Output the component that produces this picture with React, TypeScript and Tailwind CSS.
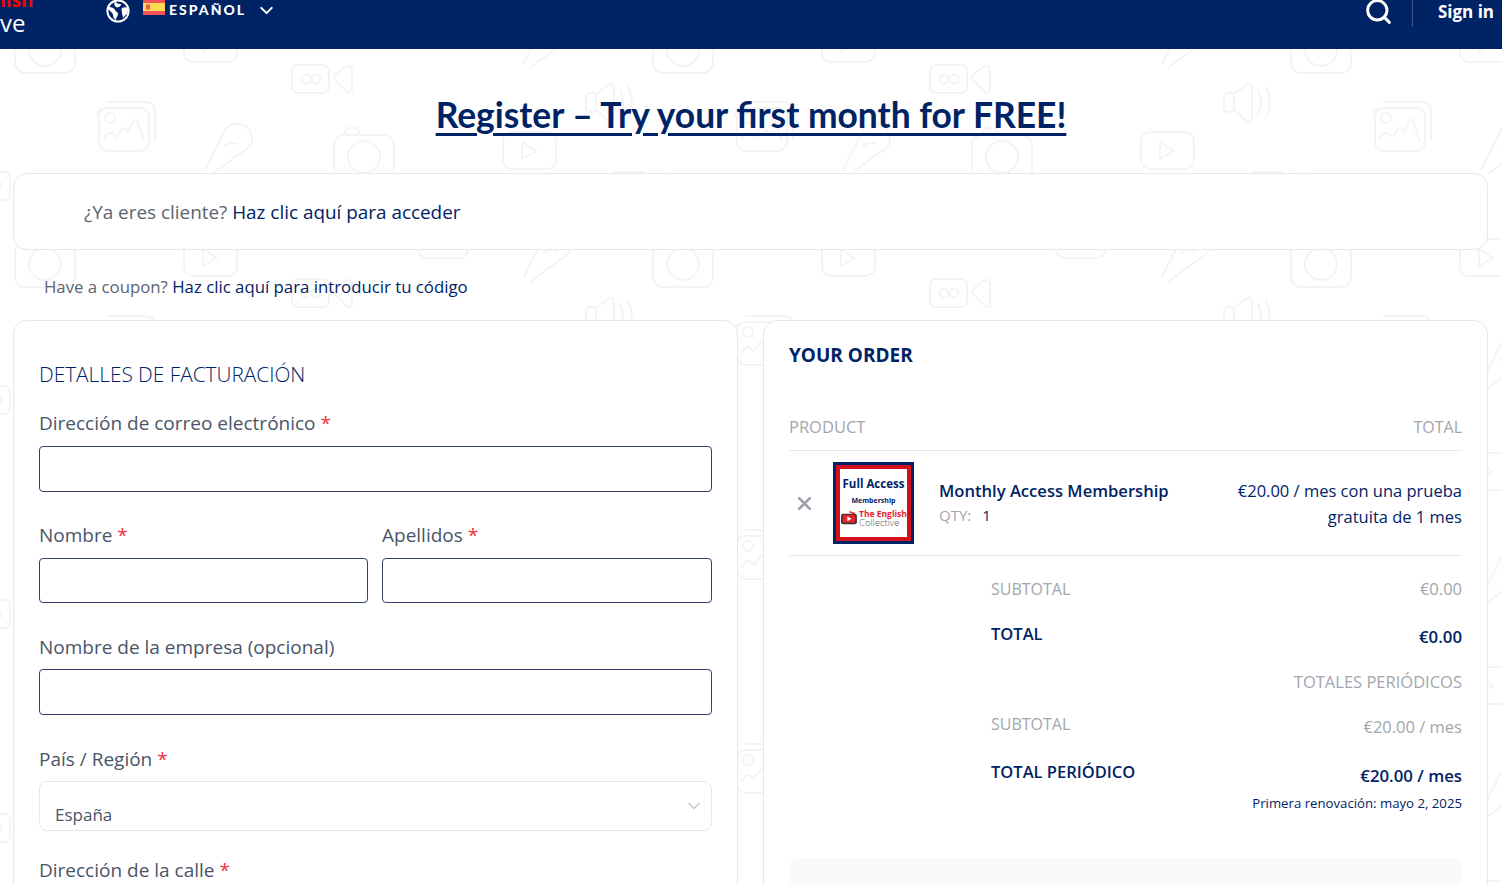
import { ChevronDown, Search, X } from "lucide-react";

function PatternIcons({ dx = 0, dy = 0 }: { dx?: number; dy?: number }) {
  return (
    <g transform={`translate(${dx} ${dy})`} fill="none" stroke="#f4f4f4" strokeWidth="2" strokeLinecap="round" strokeLinejoin="round">
      {/* camera */}
      <rect x="15" y="28" width="60" height="45" rx="10" />
      <circle cx="45" cy="50" r="16" />
      <path d="M26 27c0-4 2-6 5-6h5c3 0 4 2 4 5" />
      {/* play */}
      <rect x="184" y="25" width="53" height="37" rx="9" />
      <path d="M203 35v17l14-8z" />
      {/* video cam */}
      <rect x="292" y="65" width="37" height="28" rx="6" />
      <circle cx="306" cy="79" r="4.5" />
      <circle cx="316" cy="79" r="4.5" />
      <path d="M334 76l11-9c3-2 7-1 7 3v20c0 3-3 4-5 2l-12-12z" />
      {/* image */}
      <rect x="99" y="108" width="50" height="43" rx="9" />
      <path d="M108 102h37c7 0 10 4 10 10v28" />
      <path d="M97 116c0-4 2-6 5-7" />
      <circle cx="110" cy="118" r="5" />
      <path d="M104 139c4-8 8-7 11-3 3 3 6-10 9-8 3 2 3 5 5 2 3-8 6-13 8-9l7 20" />
      {/* mic */}
      <path d="M205 170l20-40c3-5 10-7 15-6 8 1 12 9 12 15 0 6-4 11-10 13l-30 22" />
      <path d="M225 146c3-3 9-4 13-2" />
      {/* speaker */}
      <rect x="586" y="93" width="10" height="19" rx="4" />
      <path d="M596 94l12-9c3-2 6-1 6 3v30c0 4-3 5-6 3l-12-12" />
      <path d="M620 90c4 8 4 18 0 24" />
      <path d="M628 87c5 10 5 23 0 31" />
    </g>
  );
}

function Background() {
  return (
    <svg className="absolute inset-0 h-full w-full" aria-hidden="true">
      <defs>
        <pattern id="doodles" width="638" height="214" patternUnits="userSpaceOnUse">
          <PatternIcons />
          <PatternIcons dy={214} />
          <PatternIcons dx={319} dy={107} />
          <PatternIcons dx={-319} dy={107} />
          <PatternIcons dx={319} dy={-107} />
          <PatternIcons dx={-319} dy={-107} />
        </pattern>
      </defs>
      <rect width="100%" height="100%" fill="url(#doodles)" />
    </svg>
  );
}

function GlobeIcon() {
  return (
    <svg className="-mt-[1px] h-[24px] w-[24px]" viewBox="0 0 24 24" fill="none">
      <circle cx="12" cy="12" r="10.6" stroke="#ffffff" strokeWidth="2" />
      <path d="M3 8c3 0 5 1 6 3s3 2 3 4-2 3-2 6c-2-1-3-3-3-5s-2-3-3-4-2-2-1-4z" fill="#ffffff" />
      <path d="M9 2c1 2 3 3 5 3s1 2-1 3-3 0-4-1-1-3 0-5z" fill="#ffffff" />
      <path d="M16 9c2-1 4-1 6 0 0 2 0 4-1 6-2 1-3 3-4 4 0-2-1-3-1-5s-1-4 0-5z" fill="#ffffff" />
    </svg>
  );
}

function Header() {
  return (
    <header className="relative flex h-[49px] items-start overflow-hidden bg-[#002366] text-white">
      <div className="-mt-[12px] w-[106px] font-['Open_Sans',sans-serif] leading-[24px]">
        <div className="text-[19px] font-bold text-[#ff0000]">lish</div>
        <div className="-mt-[1px] text-[24px]">ve</div>
      </div>
      <GlobeIcon />
      <svg className="-mt-[1px] ml-[13px] h-[16px] w-[22px]" viewBox="0 0 22 16">
        <rect width="22" height="16" fill="#f1555a" />
        <rect y="4" width="22" height="8" fill="#ffda55" />
        <rect x="3" y="5.5" width="4" height="5" fill="#f1555a" />
      </svg>
      <span className="ml-[4px] -mt-[1px] font-['Lato',sans-serif] text-[14px] leading-[22px] font-black tracking-[2px]">ESPAÑOL</span>
      <ChevronDown className="ml-[10px] h-[21px] w-[21px]" strokeWidth={2.4} />
      <div className="ml-auto flex items-start">
        <Search className="-mt-[3px] h-[29px] w-[29px]" strokeWidth={2.4} />
        <div className="ml-[19px] h-[27px] w-px bg-[#3d5685]" />
        <span className="ml-[25px] mr-[8px] font-['Open_Sans',sans-serif] text-[17px] leading-[24px] font-bold">Sign in</span>
      </div>
    </header>
  );
}

function Req() {
  return <span className="text-[#f0313f]"> *</span>;
}

function Label({ text, required = true }: { text: string; required?: boolean }) {
  return (
    <div className="text-[19px] leading-[26px] text-[#4a5568]">
      {text}
      {required && <Req />}
    </div>
  );
}

function Input({ className }: { className: string }) {
  return <div className={`rounded-[4px] border border-[#33406a] bg-white ${className}`} />;
}

function BillingCard() {
  return (
    <section className="h-[600px] w-[725px] rounded-t-[14px] border border-[#e8e8ec] bg-white px-[25px] pt-[40px]">
      <h2 className="text-[20.8px] leading-[26px] font-light text-[#002366]">DETALLES DE FACTURACIÓN</h2>
      <div className="mt-[23px]">
        <Label text="Dirección de correo electrónico" />
        <Input className="mt-[10px] h-[46px]" />
      </div>
      <div className="mt-[30px] flex gap-[14px]">
        <div className="w-[329px]">
          <Label text="Nombre" />
          <Input className="mt-[10px] h-[45px]" />
        </div>
        <div className="flex-1">
          <Label text="Apellidos" />
          <Input className="mt-[10px] h-[45px]" />
        </div>
      </div>
      <div className="mt-[31px]">
        <Label text="Nombre de la empresa (opcional)" required={false} />
        <Input className="mt-[9px] h-[46px]" />
      </div>
      <div className="mt-[31px]">
        <Label text="País / Región" />
        <div className="mt-[9px] flex h-[50px] items-end justify-between rounded-[8px] border border-[#e8e8ec] bg-white pr-[7px] pb-[2px] pl-[15px]">
          <span className="text-[17px] leading-[26px] text-[#4a5568]">España</span>
          <ChevronDown className="mb-[12px] h-[20px] w-[20px] text-[#c5c8d0]" strokeWidth={2} />
        </div>
      </div>
      <div className="mt-[26px]">
        <Label text="Dirección de la calle" />
      </div>
    </section>
  );
}

function ProductThumb() {
  return (
    <div className="h-[82px] w-[81px] border-[3px] border-[#002366] bg-white">
      <div className="flex h-full w-full flex-col items-center border-[4px] border-[#d2101e] pt-[8px]">
        <div className="whitespace-nowrap text-[11.5px] leading-[14px] font-bold text-[#002366]">Full Access</div>
        <div className="mt-[5px] text-[7px] leading-[10px] font-bold text-[#002366]">Membership</div>
        <div className="mt-[3px] flex w-full items-center">
          <svg className="h-[17px] w-[19px] shrink-0" viewBox="0 0 18 15">
            <path d="M9 1l5 2" stroke="#e8202a" strokeWidth="1.5" />
            <rect x="1" y="3" width="15" height="10" rx="2" fill="#333333" />
            <rect x="2.5" y="4" width="12" height="7.5" rx="1" fill="#e8202a" />
            <path d="M7 5.5v4.5l4-2.2z" fill="#ffffff" />
          </svg>
          <div className="whitespace-nowrap text-[8.5px] leading-[9px]">
            <div className="font-bold text-[#e8202a]">The English</div>
            <div className="text-[9.5px] font-light text-[#555555]">Collective</div>
          </div>
        </div>
      </div>
    </div>
  );
}

function TotalRow({ left, right, strong = false, className = "", rightClass = "" }: { left?: string; right: string; strong?: boolean; className?: string; rightClass?: string }) {
  return (
    <div className={`flex items-start justify-between ${className}`}>
      <span className={strong ? "text-[16.5px] leading-[24px] font-semibold text-[#002366]" : "text-[16px] leading-[24px] text-[#a3a6ad]"}>{left}</span>
      <span className={`${strong ? "text-[16.8px] font-semibold text-[#002366]" : "text-[16.5px] text-[#a3a6ad]"} leading-[24px] ${rightClass}`}>{right}</span>
    </div>
  );
}

function OrderCard() {
  return (
    <section className="h-[600px] w-[725px] rounded-t-[14px] border border-[#e8e8ec] bg-white px-[25px] pt-[21px]">
      <h2 className="text-[19px] leading-[26px] font-bold text-[#002366]">YOUR ORDER</h2>
      <div className="mt-[47px] flex justify-between border-b border-[#e8e8ec] pb-[11px] text-[16.5px] leading-[24px] text-[#a3a6ad]">
        <span>PRODUCT</span>
        <span className="text-[16px]">TOTAL</span>
      </div>
      <div className="flex h-[105px] items-center border-b border-[#e8e8ec]">
        <X className="ml-[5px] h-[21px] w-[21px] text-[#9da1aa]" strokeWidth={3} />
        <div className="ml-[18px]">
          <ProductThumb />
        </div>
        <div className="ml-[25px]">
          <div className="-mt-[2px] text-[16.6px] leading-[26px] font-semibold text-[#002366]">Monthly Access Membership</div>
          <div className="text-[15px] leading-[22px] text-[#a3a6ad]">
            QTY:<span className="ml-[11px] text-[#002366]">1</span>
          </div>
        </div>
        <div className="ml-auto mt-[1px] text-right text-[16.5px] leading-[26px] text-[#002366]">
          <div>€20.00 / mes con una prueba</div>
          <div>gratuita de 1 mes</div>
        </div>
      </div>
      <div className="ml-[202px] pt-[21px]">
        <TotalRow left="SUBTOTAL" right="€0.00" />
        <TotalRow left="TOTAL" right="€0.00" strong className="mt-[21px]" rightClass="pt-[3px]" />
        <TotalRow right="TOTALES PERIÓDICOS" className="mt-[21px]" />
        <TotalRow left="SUBTOTAL" right="€20.00 / mes" className="mt-[18px]" rightClass="pt-[3px]" />
        <TotalRow left="TOTAL PERIÓDICO" right="€20.00 / mes" strong className="mt-[21px]" rightClass="pt-[4px]" />
        <div className="mt-[5px] text-right text-[13.2px] leading-[20px] text-[#002366]">Primera renovación: mayo 2, 2025</div>
      </div>
      <div className="mt-[45px] h-[60px] rounded-t-[8px] bg-[#fafafa]" />
    </section>
  );
}

export default function App() {
  return (
    <div className="relative h-[885px] overflow-hidden bg-white font-['Open_Sans',sans-serif]">
      <Background />
      <div className="relative">
        <Header />
        <h1 className="pt-[43px] text-center font-['Lato',sans-serif] text-[35.4px] leading-[46px] font-bold text-[#002366] underline decoration-[3px] underline-offset-[5px]">
          Register – Try your first month for FREE!
        </h1>
        <div className="mx-[13px] mt-[35px] h-[77px] w-[1475px] rounded-[14px] border border-[#e8e8ec] bg-white pl-[70px] pt-[24px] text-[18.9px] leading-[28px] text-[#5c6470]">
          ¿Ya eres cliente? <span className="text-[#002366]">Haz clic aquí para acceder</span>
        </div>
        <div className="ml-[44px] mt-[24px] text-[16.8px] leading-[26px] text-[#5c6470]">
          Have a coupon? <span className="text-[#002366]">Haz clic aquí para introducir tu código</span>
        </div>
        <div className="mx-[13px] mt-[20px] flex gap-[25px]">
          <BillingCard />
          <OrderCard />
        </div>
      </div>
    </div>
  );
}
